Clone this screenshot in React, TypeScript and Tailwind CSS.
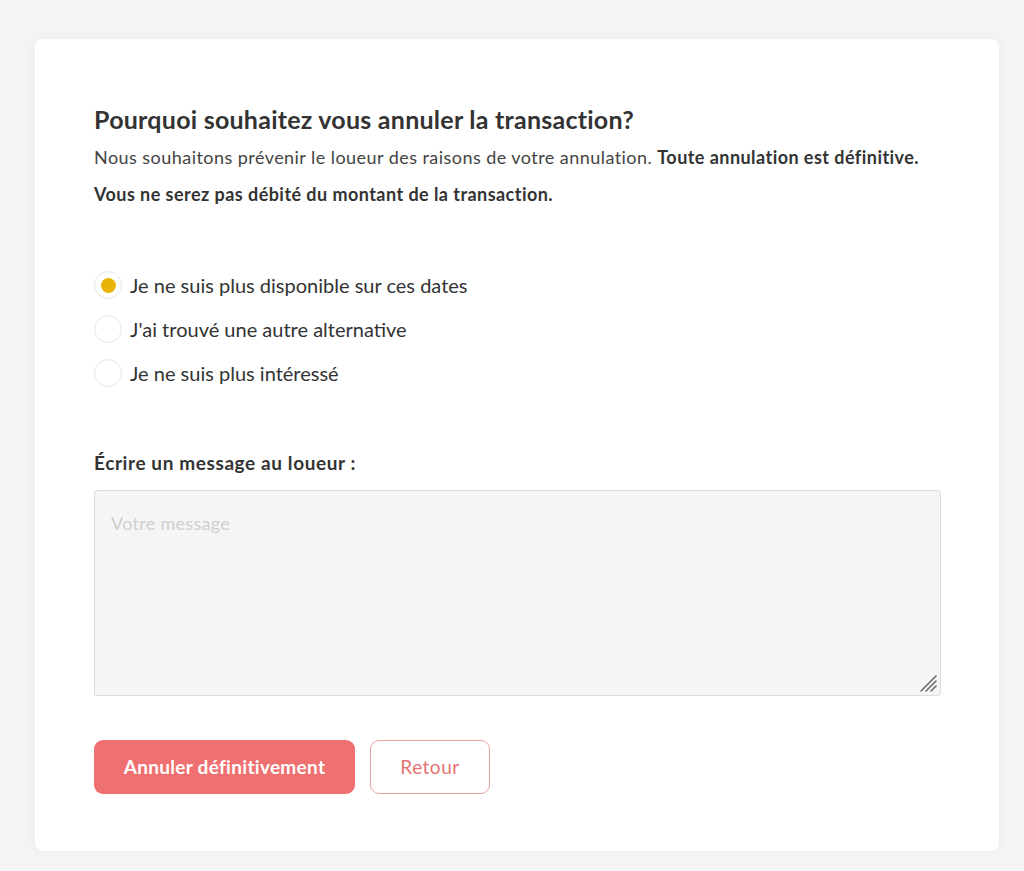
import React, { useState } from "react";

const options = [
  "Je ne suis plus disponible sur ces dates",
  "J'ai trouvé une autre alternative",
  "Je ne suis plus intéressé",
];

export default function App() {
  const [sel, setSel] = useState(0);
  return (
    <div
      className="min-h-[871px] w-full bg-[#f4f4f4] pt-[39px] pl-[35px] pr-[25px] pb-[20px]"
      style={{ fontFamily: "Lato, 'Open Sans', sans-serif" }}
    >
      <div className="w-[964px] rounded-[8px] bg-white shadow-[0_0_12px_rgba(0,0,0,0.04)] pl-[59px] pr-[58px] pt-[62px] pb-[57px]">
        <h1 className="text-[25px] font-bold leading-[36px] tracking-[0.25px] text-[#333]">
          Pourquoi souhaitez vous annuler la transaction?
        </h1>
        <p className="mt-[2px] text-[18px] leading-[37px] tracking-[0.45px] text-[#444]">
          Nous souhaitons prévenir le loueur des raisons de votre annulation.{" "}
          <span className="font-bold text-[#333]">Toute annulation est définitive.</span>
          <br />
          <span className="font-bold text-[#333]">Vous ne serez pas débité du montant de la transaction.</span>
        </p>

        <div className="mt-[58px] flex flex-col gap-[16px]">
          {options.map((o, i) => (
            <label key={i} className="flex items-center gap-[8px] cursor-pointer" onClick={() => setSel(i)}>
              <span className="flex h-[28px] w-[28px] items-center justify-center rounded-full border border-[#e6e6e6] bg-white">
                {sel === i && <span className="h-[15px] w-[15px] rounded-full bg-[#eab308]" />}
              </span>
              <span className="text-[20px] leading-[27px] text-[#333]">{o}</span>
            </label>
          ))}
        </div>

        <div className="mt-[64px] text-[19px] font-bold leading-[24px] tracking-[0.6px] text-[#333]">
          Écrire un message au loueur :
        </div>
        <div className="relative mt-[15px]">
          <textarea
            placeholder="Votre message"
            className="block h-[206px] w-full resize-none rounded-[3px] border border-[#dcdcdc] bg-[#f5f5f5] px-[16px] py-[18px] text-[18px] leading-[28px] tracking-[0.3px] text-[#333] placeholder:text-[#cfcfcf] outline-none"
          />
          <svg
            className="pointer-events-none absolute bottom-[3px] right-[3px]"
            width="20"
            height="20"
            viewBox="0 0 20 20"
          >
            <g stroke="#6b6b6b" strokeWidth="1.6" strokeLinecap="round">
              <line x1="3" y1="18" x2="18" y2="3" />
              <line x1="8" y1="18" x2="18" y2="8" />
              <line x1="13" y1="18" x2="18" y2="13" />
            </g>
          </svg>
        </div>

        <div className="mt-[44px] flex gap-[15px]">
          <button className="h-[54px] w-[261px] rounded-[9px] bg-[#ef7070] text-[19px] font-bold tracking-[0.3px] text-white">
            Annuler définitivement
          </button>
          <button className="h-[54px] w-[120px] rounded-[9px] border border-[#e8a3a3] bg-white text-[19px] tracking-[0.5px] text-[#e57373]">
            Retour
          </button>
        </div>
      </div>
    </div>
  );
}
